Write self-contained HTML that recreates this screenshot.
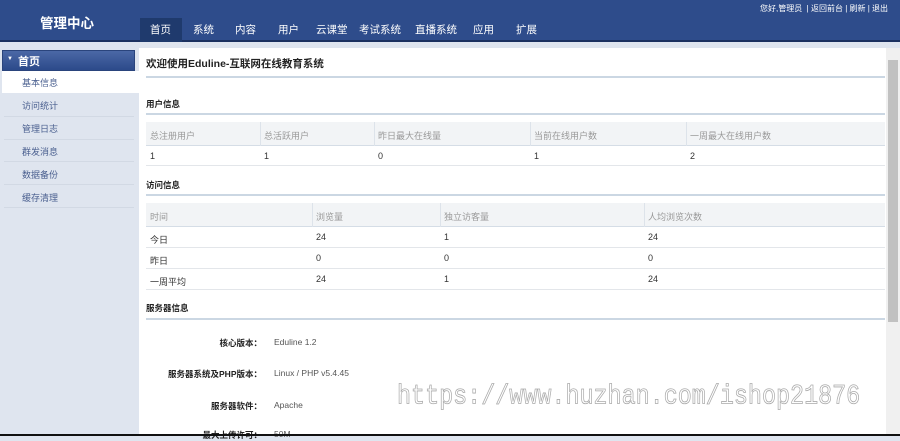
<!DOCTYPE html>
<html><head><meta charset="utf-8"><style>
*{margin:0;padding:0;box-sizing:border-box}
body{width:900px;height:436px;overflow:hidden;position:relative;background:#dfe5ef;font-family:"Liberation Sans","Noto Sans CJK SC",sans-serif;font-size:9px;color:#333}
.a{position:absolute;white-space:nowrap}
#hd{position:absolute;left:0;top:0;width:900px;height:42px;background:#2e4c8b;border-bottom:2px solid #1c3160}
.nav{top:22px;color:#fff;font-size:10.5px}
#act{position:absolute;left:140px;top:18px;width:42px;height:24px;background:#1f3a6d}
#main{position:absolute;left:139px;top:48px;width:747px;height:388px;background:#fff}
#sb{position:absolute;left:886px;top:48px;width:14px;height:388px;background:#f0f0f0}
.ln{position:absolute;left:146px;width:739px;height:2px;background:#cbd7e3}
.sec{font-weight:bold;font-size:8.5px;color:#222}
.th{position:absolute;left:146px;width:739px;background:#f2f4f6;border-bottom:1px solid #d5dde6}
.tr{position:absolute;left:146px;width:739px;border-bottom:1px solid #e3e6ea}
.vl{position:absolute;width:1px;background:#dde3ea}
.c{color:#999}
.si{left:22px;color:#4a5f8f;font-size:9px}
.sl{position:absolute;left:4px;width:130px;height:1px;background:#d2d9e4}
</style></head><body>
<div id="hd"></div>
<div id="act"></div>
<div class="a" style="left:40px;top:12px;color:#fff;font-size:13.5px;font-weight:bold">管理中心</div>
<div class="a nav" style="left:150px">首页</div>
<div class="a nav" style="left:193px">系统</div>
<div class="a nav" style="left:235px">内容</div>
<div class="a nav" style="left:278px">用户</div>
<div class="a nav" style="left:316px">云课堂</div>
<div class="a nav" style="left:359px">考试系统</div>
<div class="a nav" style="left:415px">直播系统</div>
<div class="a nav" style="left:473px">应用</div>
<div class="a nav" style="left:516px">扩展</div>
<div class="a" style="left:760px;top:3px;color:#fff;font-size:8px">您好,管理员 &nbsp;| 返回前台 | 刷新 | 退出</div>

<div class="a" style="left:2px;top:50px;width:133px;height:21px;background:linear-gradient(#4b68a6,#2c4a8a);border:1px solid #2a447c"></div>
<div class="a" style="left:7px;top:56px;color:#fff;font-size:6px">▼</div>
<div class="a" style="left:18px;top:53px;color:#fff;font-size:11px;font-weight:bold">首页</div>
<div class="a" style="left:2px;top:71px;width:137px;height:22px;background:#fff"></div>
<div class="a si" style="top:76px">基本信息</div>
<div class="a si" style="top:99px">访问统计</div><div class="sl" style="top:116px"></div>
<div class="a si" style="top:122px">管理日志</div><div class="sl" style="top:139px"></div>
<div class="a si" style="top:145px">群发消息</div><div class="sl" style="top:161px"></div>
<div class="a si" style="top:168px">数据备份</div><div class="sl" style="top:184px"></div>
<div class="a si" style="top:191px">缓存清理</div><div class="sl" style="top:207px"></div>

<div id="main"></div>
<div id="sb"><div style="position:absolute;left:2px;top:12px;width:10px;height:262px;background:#c1c1c1"></div></div>

<div class="a" style="left:146px;top:56px;font-size:10.5px;font-weight:bold;color:#222">欢迎使用Eduline-互联网在线教育系统</div>
<div class="ln" style="top:76px"></div>
<div class="a sec" style="left:146px;top:98px">用户信息</div>
<div class="ln" style="top:113px"></div>
<div class="th" style="top:122px;height:24px"></div>
<div class="tr" style="top:146px;height:20px"></div>
<div class="vl" style="left:260px;top:122px;height:24px"></div><div class="vl" style="left:374px;top:122px;height:24px"></div><div class="vl" style="left:530px;top:122px;height:24px"></div><div class="vl" style="left:686px;top:122px;height:24px"></div>
<div class="a c" style="left:150px;top:129px">总注册用户</div><div class="a c" style="left:264px;top:129px">总活跃用户</div><div class="a c" style="left:378px;top:129px">昨日最大在线量</div><div class="a c" style="left:534px;top:129px">当前在线用户数</div><div class="a c" style="left:690px;top:129px">一周最大在线用户数</div>
<div class="a" style="left:150px;top:151px">1</div><div class="a" style="left:264px;top:151px">1</div><div class="a" style="left:378px;top:151px">0</div><div class="a" style="left:534px;top:151px">1</div><div class="a" style="left:690px;top:151px">2</div>

<div class="a sec" style="left:146px;top:179px">访问信息</div>
<div class="ln" style="top:194px"></div>
<div class="th" style="top:203px;height:24px"></div>
<div class="tr" style="top:227px;height:21px"></div><div class="tr" style="top:248px;height:21px"></div><div class="tr" style="top:269px;height:21px"></div>
<div class="vl" style="left:312px;top:203px;height:24px"></div><div class="vl" style="left:440px;top:203px;height:24px"></div><div class="vl" style="left:644px;top:203px;height:24px"></div>
<div class="a c" style="left:150px;top:210px">时间</div><div class="a c" style="left:316px;top:210px">浏览量</div><div class="a c" style="left:444px;top:210px">独立访客量</div><div class="a c" style="left:648px;top:210px">人均浏览次数</div>
<div class="a" style="left:150px;top:233px">今日</div><div class="a" style="left:316px;top:232px">24</div><div class="a" style="left:444px;top:232px">1</div><div class="a" style="left:648px;top:232px">24</div>
<div class="a" style="left:150px;top:254px">昨日</div><div class="a" style="left:316px;top:253px">0</div><div class="a" style="left:444px;top:253px">0</div><div class="a" style="left:648px;top:253px">0</div>
<div class="a" style="left:150px;top:275px">一周平均</div><div class="a" style="left:316px;top:274px">24</div><div class="a" style="left:444px;top:274px">1</div><div class="a" style="left:648px;top:274px">24</div>

<div class="a sec" style="left:146px;top:302px">服务器信息</div>
<div class="ln" style="top:318px"></div>
<div class="a sec" style="left:140px;width:122px;text-align:right;top:337px">核心版本：</div><div class="a" style="left:274px;top:337px;color:#555;font-size:8.5px">Eduline 1.2</div>
<div class="a sec" style="left:140px;width:122px;text-align:right;top:368px">服务器系统及PHP版本：</div><div class="a" style="left:274px;top:368px;color:#555;font-size:8.5px">Linux / PHP v5.4.45</div>
<div class="a sec" style="left:140px;width:122px;text-align:right;top:400px">服务器软件：</div><div class="a" style="left:274px;top:400px;color:#555;font-size:8.5px">Apache</div>
<div class="a sec" style="left:140px;width:122px;text-align:right;top:429px">最大上传许可：</div><div class="a" style="left:274px;top:429px;color:#555;font-size:8.5px">50M</div>

<div class="a" style="left:397px;top:383px;font-family:'Liberation Mono',monospace;font-size:23.4px;line-height:24px;color:transparent;-webkit-text-stroke:0.7px #aaa;transform:scaleY(1.2);transform-origin:0 0">https://www.huzhan.com/ishop21876</div>
<div class="a" style="left:0;top:434px;width:900px;height:2px;background:#111"></div>
</body></html>
